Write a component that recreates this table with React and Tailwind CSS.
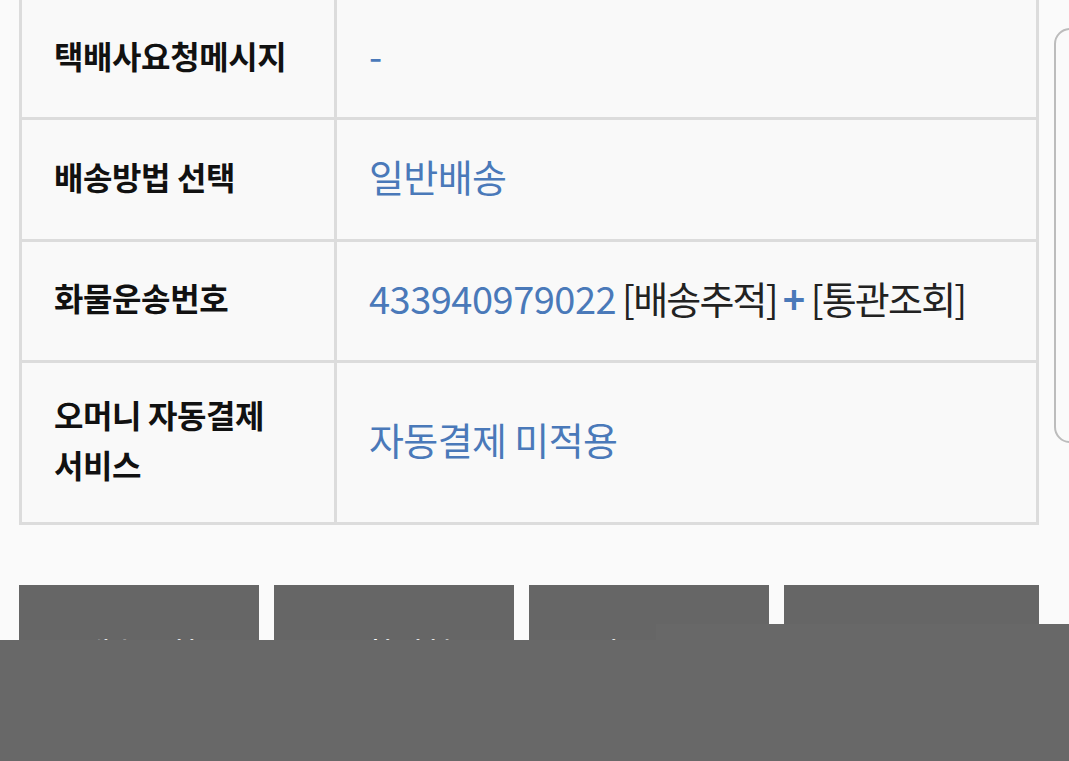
import React from 'react';

const FONT = { fontFamily: '"Noto Sans CJK KR", "Noto Sans", sans-serif' };

const rows = [
  { label: ['택배사요청메시지'], value: <span className="text-[#4a79b9]">-</span>, h: 'h-[120px]' },
  { label: ['배송방법 선택'], value: <span className="text-[#4a79b9]">일반배송</span>, h: 'h-[122px]' },
  {
    label: ['화물운송번호'],
    value: (
      <>
        <span className="text-[#4a79b9] tracking-[-0.5px]">433940979022</span>
        <span className="text-[#222] ml-[6px] tracking-[-1.8px]">[배송추적]</span>
        <span className="text-[#4a79b9] font-bold mx-[6px]">+</span>
        <span className="text-[#222] tracking-[-1.8px]">[통관조회]</span>
      </>
    ),
    h: 'h-[121px]',
  },
  {
    label: ['오머니 자동결제', '서비스'],
    value: <span className="text-[#4a79b9]">자동결제 미적용</span>,
    h: 'h-[159px]',
  },
];

const buttons = [
  { text: '배송조회', w: 'w-[240px]' },
  { text: '교환신청', w: 'w-[240px]' },
  { text: '반품신청', w: 'w-[240px]' },
  { text: '구매확정', w: 'w-[255px]' },
];

export default function App() {
  return (
    <div className="relative h-[761px] w-[1069px] overflow-hidden bg-[#fafafa]" style={FONT}>
      <div className="flex">
        <div className="ml-[19px] w-[1020px] shrink-0">
          {/* Order detail table */}
          <div className="border-x-[3px] border-b-[3px] border-[#dcdcdc] bg-[#f9f9f9]">
            {rows.map((row, i) => (
              <div
                key={i}
                className={`flex ${row.h} ${i < rows.length - 1 ? 'border-b-[3px] border-[#dcdcdc]' : ''}`}
              >
                <div className="w-[315px] shrink-0 border-r-[3px] border-[#dcdcdc] pl-[32px] pb-[8px] flex flex-col justify-center">
                  {row.label.map((l) => (
                    <div key={l} className="text-[32px] leading-[50px] font-bold text-[#111] tracking-[-0.4px]">
                      {l}
                    </div>
                  ))}
                </div>
                <div className="flex-1 pl-[32px] pb-[8px] flex items-center text-[38px] tracking-[-0.6px] whitespace-nowrap">
                  {row.value}
                </div>
              </div>
            ))}
          </div>

          {/* Action buttons */}
          <div className="mt-[60px] flex gap-[15px]">
            {buttons.map((b) => (
              <div
                key={b.text}
                className={`${b.w} h-[134px] bg-[#666666] flex items-center justify-center text-white text-[32px] tracking-[-0.5px]`}
              >
                {b.text}
              </div>
            ))}
          </div>
        </div>

        {/* side panel edge */}
        <div className="ml-[15px] mt-[28px] h-[415px] w-[40px] shrink-0 rounded-[16px] border-2 border-[#bcbcbc] bg-[#fafafa]" />
      </div>

      {/* bottom overlay bar */}
      <div className="absolute left-0 top-[640px] bottom-0 w-[656px] bg-[#686868]" />
      <div className="absolute left-[656px] top-[624px] bottom-0 right-0 bg-[#686868]" />
    </div>
  );
}
